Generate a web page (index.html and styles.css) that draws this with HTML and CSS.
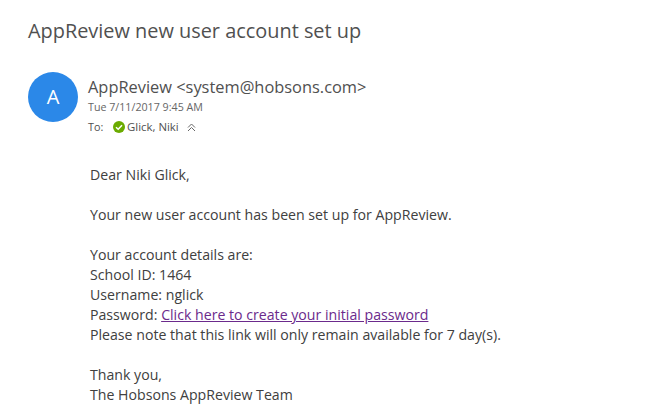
FILE: index.html
```html
<!DOCTYPE html>
<html lang="en">
<head>
<meta charset="utf-8">
<title>AppReview new user account set up</title>
<link rel="stylesheet" href="styles.css">
</head>
<body>
<h1 class="subject">AppReview new user account set up</h1>
<div class="header">
  <div class="avatar">A</div>
  <div class="meta">
    <div class="sender">AppReview &lt;system@hobsons.com&gt;</div>
    <div class="date">Tue 7/11/2017 9:45 AM</div>
    <div class="to">
      <span class="to-label">To:</span>
      <svg class="status" width="12" height="12" viewBox="0 0 12 12"><circle cx="6" cy="6" r="6" fill="#6bab00"/><path d="M3 6.2 5.2 8.3 9 4.2" fill="none" stroke="#fff" stroke-width="1.5"/></svg>
      <span class="name">Glick, Niki</span>
      <svg class="chev" width="9" height="9" viewBox="0 0 9 9"><path d="M1 4.5 4.5 1 8 4.5M1 8 4.5 4.5 8 8" fill="none" stroke="#666" stroke-width="1"/></svg>
    </div>
  </div>
</div>
<div class="body">
  <p>Dear Niki Glick,</p>
  <p>Your new user account has been set up for AppReview.</p>
  <p>Your account details are:<br>School ID: 1464<br>Username: nglick<br>Password: <a href="#">Click here to create your initial password</a><br>Please note that this link will only remain available for 7 day(s).</p>
  <p>Thank you,<br>The Hobsons AppReview Team</p>
</div>
</body>
</html>
```
FILE: styles.css
```css
html, body { margin: 0; padding: 0; }
body { width: 647px; height: 410px; overflow: hidden; background: #fff; font-family: "Open Sans", "Noto Sans", sans-serif; color: #333; }
.subject { margin: 0; padding: 19px 0 0 28px; font-size: 19.9px; line-height: 24px; font-weight: 400; color: #505050; }
.header { display: flex; gap: 10px; padding: 29px 0 0 28px; }
.avatar { width: 50px; height: 50px; border-radius: 50%; background: #2b88e8; color: #fff; font-size: 20px; line-height: 50px; text-align: center; }
.meta { display: flex; flex-direction: column; padding-top: 4px; }
.sender { font-size: 16.4px; line-height: 22px; color: #505050; }
.date { font-size: 10.7px; line-height: 14px; margin-top: 2px; color: #666; }
.to { display: flex; align-items: center; font-size: 10.8px; line-height: 20px; margin-top: 3px; color: #505050; }
.to-label { width: 25px; }
.name { margin-left: 2px; font-size: 11.4px; }
.chev { margin-left: 8px; }
.body { padding: 28px 0 0 90px; font-size: 14.15px; line-height: 20px; color: #404040; }
.body p { margin: 0 0 20px; }
.body a { color: #6b2a8c; }
```
